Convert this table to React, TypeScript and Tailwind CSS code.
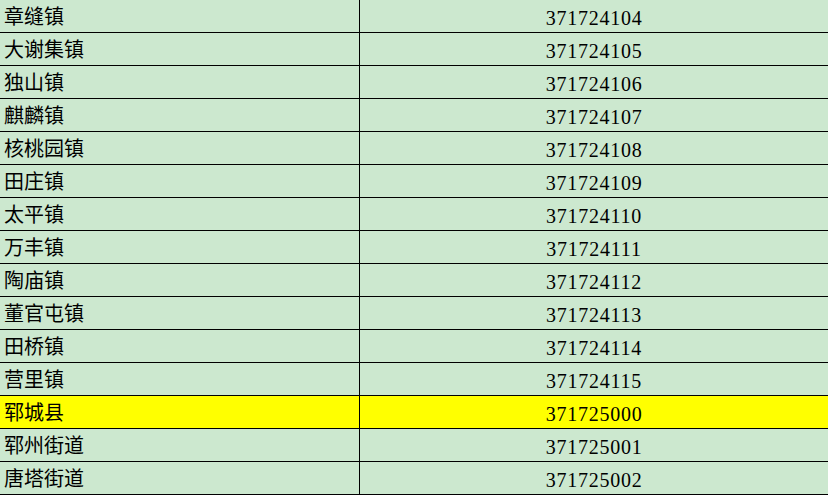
import React from 'react';

const ROWS: [string, string][] = [
  ['章缝镇', '371724104'],
  ['大谢集镇', '371724105'],
  ['独山镇', '371724106'],
  ['麒麟镇', '371724107'],
  ['核桃园镇', '371724108'],
  ['田庄镇', '371724109'],
  ['太平镇', '371724110'],
  ['万丰镇', '371724111'],
  ['陶庙镇', '371724112'],
  ['董官屯镇', '371724113'],
  ['田桥镇', '371724114'],
  ['营里镇', '371724115'],
  ['郓城县', '371725000'],
  ['郓州街道', '371725001'],
  ['唐塔街道', '371725002'],
];

export default function App() {
  return (
    <div className="w-[828px] h-[495px] overflow-hidden bg-[#cce8cf] text-black">
      {ROWS.map(([name, code]) => {
        const hl = code === '371725000';
        return (
          <div
            key={code}
            className={`flex h-[33px] border-b border-black ${hl ? 'bg-[#ffff00]' : ''}`}
          >
            <div className="w-[360px] shrink-0 border-r border-black flex items-center pl-[4px] text-[20px] leading-none font-['Noto_Sans_CJK_SC',sans-serif]">
              {name}
            </div>
            <div className="flex-1 flex items-center justify-center pt-[3px] text-[20px] leading-none tracking-[0.75px] font-['Liberation_Serif',serif]">
              {code}
            </div>
          </div>
        );
      })}
    </div>
  );
}
